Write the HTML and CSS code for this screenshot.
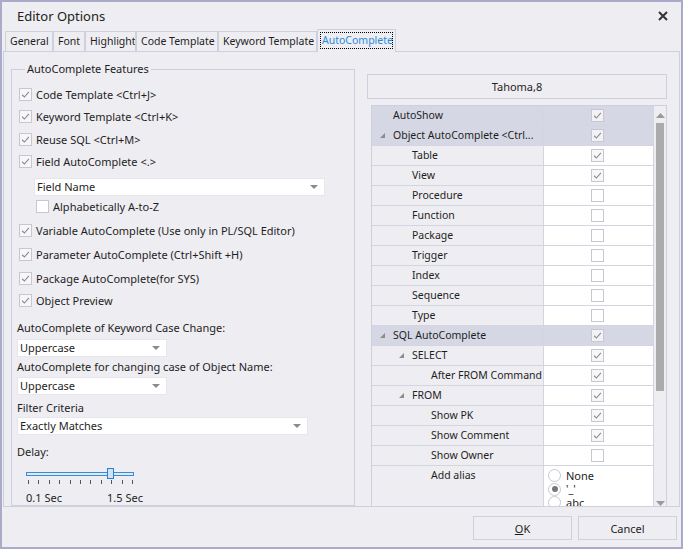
FILE: index.html
```html
<!DOCTYPE html>
<html>
<head>
<meta charset="utf-8">
<link rel="stylesheet" href="styles.css">
</head>
<body>
<div class="window">
  <div class="titlebar">
    <span class="title">Editor Options</span>
    <svg class="close" width="10" height="10" viewBox="0 0 10 10"><path d="M1 1 L9 9 M9 1 L1 9" stroke="#333" stroke-width="2"/></svg>
  </div>
  <div class="tabs">
    <div class="tab t1">General</div>
    <div class="tab t2">Font</div>
    <div class="tab t3">Highlight</div>
    <div class="tab t4">Code Template</div>
    <div class="tab t5">Keyword Template</div>
    <div class="tab active"><span class="focus">AutoComplete</span></div>
  </div>
  <div class="panel">
    <fieldset class="group">
      <legend>AutoComplete Features</legend>
      <div class="chk first"><span class="box"><svg viewBox="0 0 13 13"><path d="M2.5 6.8 L5.2 9.5 L10.5 3.5" fill="none" stroke="#8a8a8a" stroke-width="1.3"/></svg></span><span>Code Template &lt;Ctrl+J&gt;</span></div>
      <div class="chk"><span class="box"><svg viewBox="0 0 13 13"><path d="M2.5 6.8 L5.2 9.5 L10.5 3.5" fill="none" stroke="#8a8a8a" stroke-width="1.3"/></svg></span><span>Keyword Template &lt;Ctrl+K&gt;</span></div>
      <div class="chk"><span class="box"><svg viewBox="0 0 13 13"><path d="M2.5 6.8 L5.2 9.5 L10.5 3.5" fill="none" stroke="#8a8a8a" stroke-width="1.3"/></svg></span><span>Reuse SQL &lt;Ctrl+M&gt;</span></div>
      <div class="chk"><span class="box"><svg viewBox="0 0 13 13"><path d="M2.5 6.8 L5.2 9.5 L10.5 3.5" fill="none" stroke="#8a8a8a" stroke-width="1.3"/></svg></span><span>Field AutoComplete &lt;.&gt;</span></div>
      <div class="combo wide sub"><span>Field Name</span><span class="arrow"></span></div>
      <div class="chk alpha"><span class="box empty"></span><span>Alphabetically A-to-Z</span></div>
      <div class="chk var"><span class="box"><svg viewBox="0 0 13 13"><path d="M2.5 6.8 L5.2 9.5 L10.5 3.5" fill="none" stroke="#8a8a8a" stroke-width="1.3"/></svg></span><span>Variable AutoComplete (Use only in PL/SQL Editor)</span></div>
      <div class="chk gap2"><span class="box"><svg viewBox="0 0 13 13"><path d="M2.5 6.8 L5.2 9.5 L10.5 3.5" fill="none" stroke="#8a8a8a" stroke-width="1.3"/></svg></span><span>Parameter AutoComplete (Ctrl+Shift +H)</span></div>
      <div class="chk gap2"><span class="box"><svg viewBox="0 0 13 13"><path d="M2.5 6.8 L5.2 9.5 L10.5 3.5" fill="none" stroke="#8a8a8a" stroke-width="1.3"/></svg></span><span>Package AutoComplete(for SYS)</span></div>
      <div class="chk"><span class="box"><svg viewBox="0 0 13 13"><path d="M2.5 6.8 L5.2 9.5 L10.5 3.5" fill="none" stroke="#8a8a8a" stroke-width="1.3"/></svg></span><span>Object Preview</span></div>
      <div class="label l1">AutoComplete of Keyword Case Change:</div>
      <div class="combo narrow c1"><span>Uppercase</span><span class="arrow"></span></div>
      <div class="label l2">AutoComplete for changing case of Object Name:</div>
      <div class="combo narrow c2"><span>Uppercase</span><span class="arrow"></span></div>
      <div class="label l3">Filter Criteria</div>
      <div class="combo wide c3"><span>Exactly Matches</span><span class="arrow"></span></div>
      <div class="label l4">Delay:</div>
      <div class="slider">
        <div class="track"><span class="thumb"></span></div>
        <div class="ticks"><i></i><i></i><i></i><i></i><i></i><i></i><i></i><i></i><i></i><i></i><i></i></div>
        <div class="ticklabels"><span class="first">0.1 Sec</span><span>1.5 Sec</span></div>
      </div>
    </fieldset>
    <div class="right">
      <div class="fontbox">Tahoma,8</div>
      <div class="grid">
        <div class="rows">
          <div class="row hdr"><div class="name lv0">AutoShow</div><div class="val"><span class="box"><svg viewBox="0 0 13 13"><path d="M2.5 6.8 L5.2 9.5 L10.5 3.5" fill="none" stroke="#8a8a8a" stroke-width="1.3"/></svg></span></div></div>
          <div class="row hdr"><div class="name lv0"><svg class="exp" viewBox="0 0 5 5"><polygon points="5,0 5,5 0,5" fill="#8c8c8c"/></svg><span class="txt">Object AutoComplete &lt;Ctrl...</span></div><div class="val"><span class="box"><svg viewBox="0 0 13 13"><path d="M2.5 6.8 L5.2 9.5 L10.5 3.5" fill="none" stroke="#8a8a8a" stroke-width="1.3"/></svg></span></div></div>
          <div class="row"><div class="name lv1">Table</div><div class="val"><span class="box"><svg viewBox="0 0 13 13"><path d="M2.5 6.8 L5.2 9.5 L10.5 3.5" fill="none" stroke="#8a8a8a" stroke-width="1.3"/></svg></span></div></div>
          <div class="row"><div class="name lv1">View</div><div class="val"><span class="box"><svg viewBox="0 0 13 13"><path d="M2.5 6.8 L5.2 9.5 L10.5 3.5" fill="none" stroke="#8a8a8a" stroke-width="1.3"/></svg></span></div></div>
          <div class="row"><div class="name lv1">Procedure</div><div class="val"><span class="box empty"></span></div></div>
          <div class="row"><div class="name lv1">Function</div><div class="val"><span class="box empty"></span></div></div>
          <div class="row"><div class="name lv1">Package</div><div class="val"><span class="box empty"></span></div></div>
          <div class="row"><div class="name lv1">Trigger</div><div class="val"><span class="box empty"></span></div></div>
          <div class="row"><div class="name lv1">Index</div><div class="val"><span class="box empty"></span></div></div>
          <div class="row"><div class="name lv1">Sequence</div><div class="val"><span class="box empty"></span></div></div>
          <div class="row"><div class="name lv1">Type</div><div class="val"><span class="box empty"></span></div></div>
          <div class="row hdr"><div class="name lv0"><svg class="exp" viewBox="0 0 5 5"><polygon points="5,0 5,5 0,5" fill="#8c8c8c"/></svg>SQL AutoComplete</div><div class="val"><span class="box"><svg viewBox="0 0 13 13"><path d="M2.5 6.8 L5.2 9.5 L10.5 3.5" fill="none" stroke="#8a8a8a" stroke-width="1.3"/></svg></span></div></div>
          <div class="row"><div class="name lv1"><svg class="exp" viewBox="0 0 5 5"><polygon points="5,0 5,5 0,5" fill="#8c8c8c"/></svg>SELECT</div><div class="val"><span class="box"><svg viewBox="0 0 13 13"><path d="M2.5 6.8 L5.2 9.5 L10.5 3.5" fill="none" stroke="#8a8a8a" stroke-width="1.3"/></svg></span></div></div>
          <div class="row"><div class="name lv2">After FROM Command</div><div class="val"><span class="box"><svg viewBox="0 0 13 13"><path d="M2.5 6.8 L5.2 9.5 L10.5 3.5" fill="none" stroke="#8a8a8a" stroke-width="1.3"/></svg></span></div></div>
          <div class="row"><div class="name lv1"><svg class="exp" viewBox="0 0 5 5"><polygon points="5,0 5,5 0,5" fill="#8c8c8c"/></svg>FROM</div><div class="val"><span class="box"><svg viewBox="0 0 13 13"><path d="M2.5 6.8 L5.2 9.5 L10.5 3.5" fill="none" stroke="#8a8a8a" stroke-width="1.3"/></svg></span></div></div>
          <div class="row"><div class="name lv2">Show PK</div><div class="val"><span class="box"><svg viewBox="0 0 13 13"><path d="M2.5 6.8 L5.2 9.5 L10.5 3.5" fill="none" stroke="#8a8a8a" stroke-width="1.3"/></svg></span></div></div>
          <div class="row"><div class="name lv2">Show Comment</div><div class="val"><span class="box"><svg viewBox="0 0 13 13"><path d="M2.5 6.8 L5.2 9.5 L10.5 3.5" fill="none" stroke="#8a8a8a" stroke-width="1.3"/></svg></span></div></div>
          <div class="row"><div class="name lv2">Show Owner</div><div class="val"><span class="box empty"></span></div></div>
          <div class="row tall"><div class="name lv2">Add alias</div><div class="val radios">
            <div class="radio"><span class="circle"></span><span>None</span></div>
            <div class="radio"><span class="circle on"></span><span>'_'</span></div>
            <div class="radio"><span class="circle"></span><span>abc</span></div>
          </div></div>
        </div>
        <div class="scroll">
          <svg class="sarrow" width="9" height="5" viewBox="0 0 9 5"><polygon points="4.5,0 9,5 0,5" fill="#9a9a9a"/></svg>
          <div class="sthumb"></div>
          <div class="sspace"></div>
          <svg class="sarrow" width="9" height="5" viewBox="0 0 9 5"><polygon points="0,0 9,0 4.5,5" fill="#9a9a9a"/></svg>
        </div>
      </div>
    </div>
  </div>
  <div class="footer">
    <button class="btn"><u>O</u>K</button>
    <button class="btn">Cancel</button>
  </div>
</div>
</body>
</html>
```
FILE: styles.css
```css
* { box-sizing: border-box; }
body { margin: 0; }
.window {
  width: 683px; height: 549px;
  border: 2px solid #a9abc9;
  background: #eeedf2;
  display: flex; flex-direction: column;
  font-family: "Noto Sans", sans-serif;
  font-size: 11px;
  color: #1e1e1e;
  overflow: hidden;
}
.titlebar {
  height: 27px; flex: none;
  display: flex; align-items: center; justify-content: space-between;
  padding: 0 13px 0 15px;
}
.title { font-size: 13px; color: #222; }
.close { display: block; }
.tabs {
  height: 22px; flex: none;
  display: flex; align-items: flex-end;
  padding-left: 3px;
  font-size: 10.5px;
}
.tab {
  height: 20px;
  border: 1px solid #cfd0de; border-bottom: none;
  padding: 0 0 0 4px;
  line-height: 18px;
  white-space: nowrap;
  overflow: hidden;
}
.t1 { width: 48px; }
.t2 { width: 32px; }
.t3 { width: 51px; }
.t4 { width: 82px; }
.t5 { width: 99px; }
.tab.active {
  width: 79px;
  height: 23px;
  margin-bottom: -1px;
  position: relative; z-index: 1;
  background: #eeedf2;
  padding: 2px 2px 0;
}
.focus {
  display: block;
  outline: 1px dotted #000;
  outline-offset: -1px;
  color: #2a89d8;
  line-height: 17px;
  padding: 0 2px;
}
.panel {
  height: 456px; flex: none;
  margin: 0 1px;
  border: 1px solid #cfd0de;
  display: grid;
  grid-template-columns: 344px 300px;
  column-gap: 12px;
  padding-left: 7px;
}
.group {
  margin: 10px 0 0 0;
  padding: 0 5px;
  border: 1px solid #cfd0de;
  min-width: 0;
  display: flex; flex-direction: column;
}
.group legend {
  margin-left: 8px;
  padding: 0 2px;
  line-height: 14px;
}
.chk {
  display: flex; align-items: center; gap: 4px;
  height: 22.5px;
  margin-left: 2px;
  white-space: nowrap;
}
.chk.first { margin-top: 7px; }
.chk.alpha { height: 21px; margin-left: 19px; }
.chk.var { height: 22px; margin-top: 2px; }
.chk.gap2 { height: 22px; margin-top: 2px; }
.box {
  width: 13px; height: 13px; flex: none;
  border: 1px solid #c6c7d1;
  background: #f7f7fa;
  display: block;
}
.box.empty { background: #fff; }
.box svg { display: block; width: 11px; height: 11px; }
.combo {
  height: 18px;
  background: #fff;
  border: 1px solid #e6e6ec;
  display: flex; align-items: center; justify-content: space-between;
  padding: 0 6px 0 2px;
  line-height: 16px;
}
.combo.wide { width: 291px; }
.combo.narrow { width: 150px; }
.combo.sub { margin-left: 17px; margin-top: 5px; }
.arrow {
  width: 0; height: 0;
  border-left: 4px solid transparent;
  border-right: 4px solid transparent;
  border-top: 4px solid #8a8a8a;
}
.label { line-height: 14px; height: 14px; white-space: nowrap; }
.l1 { margin-top: 9px; }
.c1 { margin-top: 4px; }
.l2 { margin-top: 3px; }
.c2 { margin-top: 3px; }
.l3 { margin-top: 6px; }
.c3 { margin-top: 2px; }
.l4 { margin-top: 10px; }
.slider { margin-left: 9px; margin-top: 13px; width: 140px; }
.track {
  width: 108px; height: 4px;
  border: 1px solid #3a8bd6;
  background: #dde9f6;
  display: flex; align-items: center;
  padding-left: 80px;
}
.thumb {
  display: block; flex: none;
  width: 7px; height: 11px;
  background: #cfe2f6;
  border: 1px solid #2a80d0;
}
.ticks {
  margin-top: 4px; margin-left: 2px;
  width: 105px; height: 4px;
  display: flex; justify-content: space-between;
}
.ticks i { display: block; width: 1px; height: 4px; background: #555; }
.ticklabels { margin-top: 7px; display: flex; line-height: 14px; white-space: nowrap; }
.ticklabels .first { width: 81px; }

.right {
  display: flex; flex-direction: column;
  min-height: 0;
}
.fontbox {
  margin-top: 22px;
  height: 25px; flex: none;
  border: 1px solid #cfd0de;
  text-align: center;
  line-height: 23px;
}
.grid {
  margin-top: 6px; margin-left: 4px;
  flex: 1; min-height: 0;
  overflow: hidden;
  display: flex;
  border: 1px solid #cfd0de;
  border-bottom: none;
}
.rows { width: 281px; flex: none; }
.row {
  display: flex;
  height: 20px;
  border-bottom: 1px solid #d3d5e1;
}
.row.tall { height: 60px; }
.name {
  width: 172px; flex: none;
  border-right: 1px solid #d3d5e1;
  background: #eeedf2;
  line-height: 19px;
  white-space: nowrap;
  overflow: hidden;
  display: flex; align-items: center;
  font-size: 10.5px;
}
.name .txt { overflow: hidden; white-space: nowrap; }
.row.tall .name { align-items: flex-start; }
.val {
  flex: 1;
  background: #fff;
  display: flex; align-items: center; justify-content: center;
  padding-right: 2px;
}
.row.hdr .name, .row.hdr .val { background: #d5d8e4; }
.row.hdr .box { background: #f2f2f6; }
.lv0 { padding-left: 21px; }
.lv1 { padding-left: 40px; }
.lv2 { padding-left: 59px; }
.exp { width: 5px; height: 5px; flex: none; margin-left: -13px; margin-right: 8px; }
.radios {
  flex-direction: column; align-items: flex-start; justify-content: flex-start;
  padding: 3px 0 0 4px;
}
.radio { display: flex; align-items: center; gap: 5px; height: 13.5px; line-height: 12px; overflow: hidden; }
.circle {
  width: 13px; height: 13px; flex: none;
  border: 1px solid #c6c7d1; border-radius: 50%;
  background: #fff;
  display: flex; align-items: center; justify-content: center;
}
.circle.on::after {
  content: ""; width: 6px; height: 6px; border-radius: 50%; background: #777;
}
.scroll {
  flex: 1;
  border-left: 1px solid #d3d5e1;
  display: flex; flex-direction: column; align-items: center;
  padding-top: 7px;
}
.sarrow { display: block; flex: none; }
.sthumb { width: 8px; height: 268px; margin-top: 5px; background: #ababab; flex: none; }
.sspace { flex: 1; }
.footer {
  flex: 1;
  display: flex; justify-content: flex-end; align-items: flex-start; gap: 6px;
  padding: 9px 4px 0 0;
}
.btn {
  width: 99px; height: 24px;
  border: 1px solid #cfd0de;
  background: #eeedf2;
  font-family: "Noto Sans", sans-serif;
  font-size: 11px;
  color: #1e1e1e;
  padding: 0;
}
```
